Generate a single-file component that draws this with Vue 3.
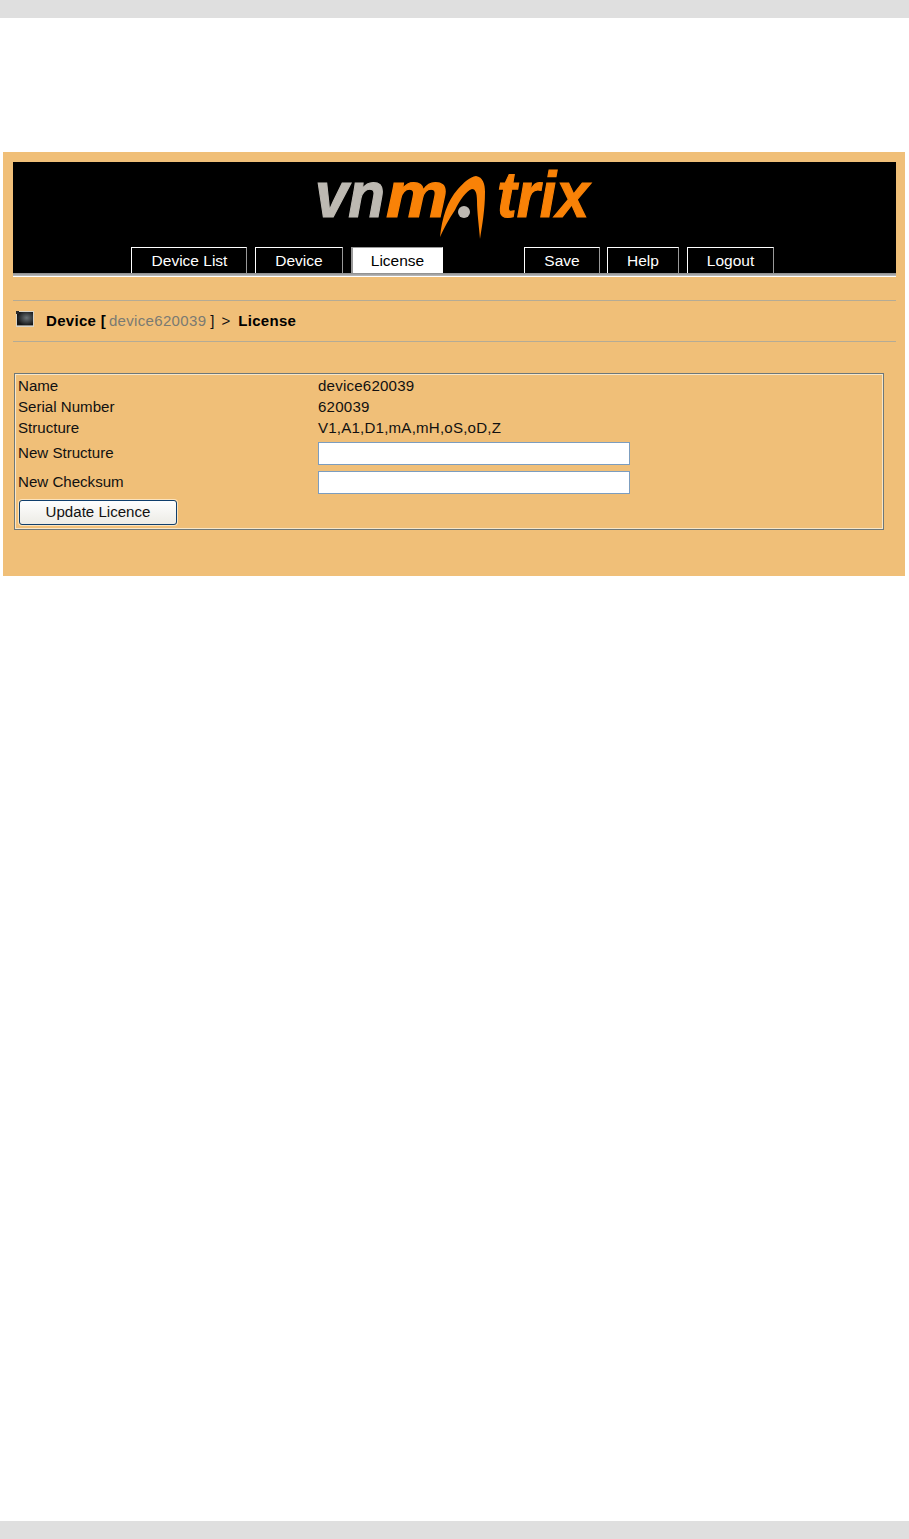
<script setup>
const tabsLeft = [
  { label: 'Device List', cls: 'w-list' },
  { label: 'Device', cls: 'w-device' },
  { label: 'License', cls: 'w-license', active: true },
]
const tabsRight = [
  { label: 'Save', cls: 'w-save' },
  { label: 'Help', cls: 'w-help' },
  { label: 'Logout', cls: 'w-logout' },
]
</script>

<template>
  <div class="page">
    <div class="bar"></div>
    <main class="panel">
      <header class="head">
        <svg class="logo" width="290" height="88" viewBox="0 -12 290 88">
          <text transform="translate(2 49) scale(.937 1)" class="lg grey">vn</text>
          <text transform="translate(73 49) scale(1.09 1)" class="lg orange">m</text>
          <text transform="translate(184 49) scale(.924 1)" class="lg orange">trix</text>
          <path class="arc" d="M127 69 C129 50 134 33 145 21 C151 14 157 9 163 8 C170 9 172 16 172 24 C172 42 169 58 167 71 C166 58 164 44 164 33 C164 24 162 21 159 21 C153 23 147 32 142 42 C136 51 131 60 127 69 Z"/>
          <circle cx="151" cy="44" r="6" fill="#bdb9b2"/>
        </svg>
        <nav class="tabs">
          <div class="group">
            <a v-for="t in tabsLeft" :key="t.label" class="tab" :class="[t.cls, { active: t.active }]">{{ t.label }}</a>
          </div>
          <div class="group right">
            <a v-for="t in tabsRight" :key="t.label" class="tab" :class="t.cls">{{ t.label }}</a>
          </div>
        </nav>
      </header>
      <div class="head-rule"></div>

      <div class="crumb">
        <svg class="icon" width="18" height="16" viewBox="0 0 18 16">
          <defs>
            <radialGradient id="scr" cx="0.6" cy="0.45" r="0.6">
              <stop offset="0" stop-color="#6a7276"/>
              <stop offset="1" stop-color="#141618"/>
            </radialGradient>
          </defs>
          <rect x="0" y="0" width="18" height="16" fill="#d8d4c8"/>
          <rect x="1" y="1" width="16" height="13" fill="url(#scr)"/>
          <rect x="0" y="0" width="3" height="3" fill="#2a2a2a"/>
          <rect x="1" y="14" width="16" height="1" fill="#8e8c84"/>
        </svg>
        <span class="strong">Device [</span>
        <span class="dev">device620039</span>
        <span class="plain">]</span>
        <span class="plain gt">&gt;</span>
        <span class="strong">License</span>
      </div>

      <section class="box">
        <div class="cell">Name</div><div class="cell val">device620039</div>
        <div class="cell">Serial Number</div><div class="cell val">620039</div>
        <div class="cell">Structure</div><div class="cell val">V1,A1,D1,mA,mH,oS,oD,Z</div>
        <div class="cell">New Structure</div><div class="cell ctl"><input class="field" type="text" /></div>
        <div class="cell">New Checksum</div><div class="cell ctl"><input class="field" type="text" /></div>
        <div class="cell ctl btn-cell"><button class="btn" type="button">Update Licence</button></div>
      </section>
    </main>
    <div class="bar end"></div>
  </div>
</template>

<style>
html, body { margin: 0; background: #fff; }
</style>

<style scoped>
.page {
  width: 909px;
  height: 1539px;
  display: flex;
  flex-direction: column;
  font-family: "Liberation Sans", Arial, sans-serif;
  color: #111;
}
.bar { height: 18px; background: #dfdfdf; flex: none; }
.bar.end { margin-top: auto; }
.panel {
  margin: 134px 4px 0 3px;
  height: 424px;
  box-sizing: border-box;
  padding: 10px 9px 0 10px;
  background: #f0bf78;
}
.head {
  height: 111px;
  background: #000;
  display: flex;
  flex-direction: column;
  justify-content: space-between;
}
.logo { margin: -6px 0 0 300px; display: block; flex: none; }
.lg { font-family: "Liberation Sans", Arial, sans-serif; font-weight: 700; font-style: italic; font-size: 64px; stroke-width: 1.2px; }
.grey { fill: #bdb9b2; stroke: #bdb9b2; }
.orange { fill: #f98207; stroke: #f98207; }
.arc { fill: #f98207; }
.tabs { display: flex; margin-left: 118px; gap: 81px; }
.group { display: flex; gap: 8px; }
.group.right .w-help { margin-left: -1px; }
.tab {
  height: 26px;
  box-sizing: border-box;
  border: 1px solid #fff;
  border-bottom: 0;
  border-right-color: #999;
  color: #fff;
  font-size: 15.5px;
  line-height: 25px;
  text-align: center;
}
.tab.active {
  background: #fff;
  color: #000;
  border-color: #999;
  border-left-width: 2px;
  border-right-color: #fff;
}
.w-list { width: 116px; padding-left: 1px; }
.w-device { width: 88px; }
.w-license { width: 92px; }
.w-save { width: 76px; }
.w-help { width: 72px; }
.w-logout { width: 87px; }
.head-rule {
  height: 4px;
  box-sizing: border-box;
  background: linear-gradient(#8a8a8a, #bdbdbd);
  border-bottom: 1px solid #fff;
}
.crumb {
  margin-top: 23px;
  height: 38px;
  padding-bottom: 2px;
  border-top: 1px solid #b4ab95;
  border-bottom: 1px solid #b4ab95;
  display: flex;
  align-items: center;
  font-size: 15px;
}
.icon { margin: -3px 12px 0 3px; flex: none; }
.strong { font-weight: 700; color: #000; letter-spacing: .3px; }
.dev { color: #7a7a72; margin-left: 3px; letter-spacing: .33px; }
.plain { margin-left: 4px; }
.gt { margin: 0 8px 0 7px; }
.box {
  margin: 31px 12px 0 1px;
  height: 157px;
  box-sizing: border-box;
  border: 1px solid #6d7779;
  box-shadow: inset 0 0 0 1px #f8e6c8;
  padding: 2px 0 0 3px;
  display: grid;
  grid-template-columns: 300px 1fr;
  grid-template-rows: 20px 22px 21px 29px 29px 29px;
  font-size: 15.1px;
}
.cell { display: flex; align-items: center; white-space: nowrap; padding-bottom: 2px; }
.cell.ctl { padding-bottom: 0; }
.val { letter-spacing: .2px; }
.btn-cell { grid-column: 1 / 3; }
.field {
  width: 312px;
  height: 23px;
  box-sizing: border-box;
  border: 1px solid #7c9dbf;
  background: #fff;
  padding: 0;
  margin: 0;
  outline: none;
}
.btn {
  width: 158px;
  height: 25px;
  margin: 2px 0 0 1px;
  box-sizing: border-box;
  border: 1px solid #0f3e6c;
  border-radius: 3px;
  background: linear-gradient(#fefefe, #ecebe5);
  box-shadow: 0 0 0 1px #fbe3bd;
  color: #111;
  font-family: inherit;
  font-size: 15.1px;
  padding: 0 0 2px;
}
</style>
